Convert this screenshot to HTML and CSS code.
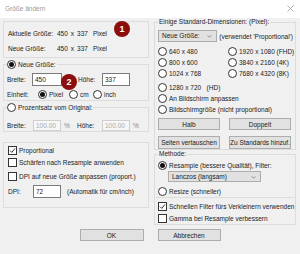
FILE: index.html
```html
<!DOCTYPE html>
<html lang="de">
<head>
    <meta charset="utf-8">
    <title>Größe ändern</title>
    <link rel="stylesheet" href="styles.css">
</head>
<body>
    <div class="window">
        <div class="titlebar">
            <span class="title">Größe ändern</span>
            <svg class="close" viewBox="0 0 7 7"><path d="M0.5 0.5L6.5 6.5M6.5 0.5L0.5 6.5"/></svg>
        </div>

        <div class="dialog">
            <div class="col">
                <div class="group info">
                    <div class="info-row"><span class="info-label">Aktuelle Größe:</span><span>450</span><span class="times">x</span><span>337</span><span class="unit">Pixel</span></div>
                    <div class="info-row"><span class="info-label">Neue Größe:</span><span>450</span><span class="times">x</span><span>337</span><span class="unit">Pixel</span></div>
                </div>

                <fieldset class="group size">
                    <legend><span class="radio on"></span><span class="opt-text">Neue Größe:</span></legend>
                    <div class="row size-row">
                        <span class="lbl-w">Breite:</span>
                        <span class="field w30">450</span>
                        <span class="lbl-h">Höhe:</span>
                        <span class="field w28">337</span>
                    </div>
                    <div class="row unit-row">
                        <span class="lbl-unit">Einheit:</span>
                        <span class="opt opt-px"><span class="radio on"></span><span class="opt-text">Pixel</span></span>
                        <span class="opt opt-cm"><span class="radio"></span><span class="opt-text">cm</span></span>
                        <span class="opt"><span class="radio"></span><span class="opt-text">inch</span></span>
                    </div>
                </fieldset>

                <fieldset class="group percent">
                    <legend><span class="radio"></span><span class="opt-text">Prozentsatz vom Original:</span></legend>
                    <div class="row pct-row">
                        <span class="lbl-pw">Breite:</span>
                        <span class="field off w28">100.00</span>
                        <span class="pct">%</span>
                        <span class="lbl-ph">Höhe:</span>
                        <span class="field off w28">100.00</span>
                        <span class="pct">%</span>
                    </div>
                </fieldset>

                <div class="group options">
                    <div class="row"><span class="check on"><svg viewBox="0 0 7 7"><path d="M1 3.6L2.8 5.4L6 1.4"/></svg></span><span class="opt-text">Proportional</span></div>
                    <div class="row"><span class="check"></span><span class="opt-text">Schärfen nach Resample anwenden</span></div>
                    <div class="row gap2"><span class="check"></span><span class="opt-text">DPI auf neue Größe anpassen (proport.)</span></div>
                    <div class="row dpi-row">
                        <span class="lbl-dpi">DPI:</span>
                        <span class="field w28">72</span>
                        <span class="dpi-note">(Automatik für cm/inch)</span>
                    </div>
                </div>
            </div>

            <div class="col">
                <fieldset class="group presets">
                    <legend class="text-legend">Einige Standard-Dimensionen: (Pixel):</legend>
                    <div class="row select-row">
                        <span class="select w62">Neue Größe:<svg class="chev" viewBox="0 0 6 4"><path d="M0.5 0.5L3 3L5.5 0.5"/></svg></span>
                        <span class="note">(verwendet 'Proportional')</span>
                    </div>
                    <div class="preset-grid">
                        <span class="opt"><span class="radio"></span><span class="opt-text">640 x 480</span></span>
                        <span class="opt"><span class="radio"></span><span class="opt-text">1920 x 1080 (FHD)</span></span>
                        <span class="opt"><span class="radio"></span><span class="opt-text">800 x 600</span></span>
                        <span class="opt"><span class="radio"></span><span class="opt-text">3840 x 2160 (4K)</span></span>
                        <span class="opt"><span class="radio"></span><span class="opt-text">1024 x 768</span></span>
                        <span class="opt"><span class="radio"></span><span class="opt-text">7680 x 4320 (8K)</span></span>
                    </div>
                    <div class="row gap2"><span class="radio"></span><span class="opt-text">1280 x 720&nbsp;&nbsp;&nbsp;(HD)</span></div>
                    <div class="row r11"><span class="radio"></span><span class="opt-text">An Bildschirm anpassen</span></div>
                    <div class="row r11"><span class="radio"></span><span class="opt-text">Bildschirmgröße (nicht proportional)</span></div>
                    <div class="btn-row first">
                        <span class="btn">Halb</span>
                        <span class="btn">Doppelt</span>
                    </div>
                    <div class="btn-row second">
                        <span class="btn">Seiten vertauschen</span>
                        <span class="btn">Zu Standards hinzuf.</span>
                    </div>
                </fieldset>

                <fieldset class="group method">
                    <legend class="text-legend">Methode:</legend>
                    <div class="row resample"><span class="radio on"></span><span class="opt-text">Resample (bessere Qualität), Filter:</span></div>
                    <span class="select filter">Lanczos (langsam)<svg class="chev" viewBox="0 0 6 4"><path d="M0.5 0.5L3 3L5.5 0.5"/></svg></span>
                    <div class="row resize"><span class="radio"></span><span class="opt-text">Resize (schneller)</span></div>
                    <div class="divider"></div>
                    <div class="row"><span class="check on"><svg viewBox="0 0 7 7"><path d="M1 3.6L2.8 5.4L6 1.4"/></svg></span><span class="opt-text">Schnellen Filter fürs Verkleinern verwenden</span></div>
                    <div class="row"><span class="check"></span><span class="opt-text">Gamma bei Resample verbessern</span></div>
                </fieldset>
            </div>
        </div>

        <div class="actions">
            <span class="btn ok">OK</span>
            <span class="btn cancel">Abbrechen</span>
        </div>

        <span class="badge badge-1">1</span>
        <span class="badge badge-2">2</span>
    </div>
</body>
</html>
```

FILE: styles.css
```css
:root {
    --bg-color: #f0f0f0;
    --text-color: #1a1a1a;
    --frame-color: #dcdcdc;
    --button-color: #e1e1e1;
    --button-border: #adadad;
    --badge-color: #8b0d0d;
}

* {
    box-sizing: border-box;
}

body {
    margin: 0;
    background-color: #fff;
    color: var(--text-color);
    font-family: 'Liberation Sans', Arial, sans-serif;
    font-size: 6.5px;
}

.window {
    position: relative;
    width: 300px;
    height: 254px;
    background-color: var(--bg-color);
    overflow: hidden;
}

.titlebar {
    height: 18px;
    background-color: #fff;
    display: flex;
    align-items: center;
    justify-content: space-between;
    padding: 0 6px 2px 5px;
}

.title {
    color: #9a9a9a;
}

.close {
    width: 7px;
    height: 7px;
    fill: none;
    stroke: #9a9a9a;
    stroke-width: 0.8;
}

.dialog {
    display: grid;
    grid-template-columns: 146px 142px;
    column-gap: 5px;
    padding-left: 3px;
}

.col {
    display: flex;
    flex-direction: column;
    align-items: stretch;
}

.group {
    border: 1px solid var(--frame-color);
}

fieldset.group {
    margin: 0;
    min-width: 0;
    padding: 0 2px 0 3px;
}

legend {
    display: flex;
    align-items: center;
    height: 12px;
    padding: 0 1px 0 0;
}

.text-legend {
    height: 8px;
    line-height: 8px;
    padding: 0 1px;
}

.row {
    display: flex;
    align-items: center;
    height: 12px;
    white-space: nowrap;
}

.gap2 {
    margin-top: 2px;
}

.r11 {
    height: 11px;
}

/* radio and check boxes */
.radio {
    flex: none;
    display: inline-block;
    width: 9px;
    height: 9px;
    border: 1px solid #333;
    border-radius: 50%;
    background-color: #fff;
}

.radio.on::after {
    content: "";
    display: block;
    width: 5px;
    height: 5px;
    margin: 1px;
    border-radius: 50%;
    background-color: #111;
}

.check {
    flex: none;
    display: inline-block;
    width: 9px;
    height: 9px;
    border: 1px solid #333;
    background-color: #fff;
}

.check svg {
    display: block;
    width: 7px;
    height: 7px;
    fill: none;
    stroke: #222;
    stroke-width: 0.9;
}

.opt-text {
    margin-left: 2px;
}

.opt {
    display: flex;
    align-items: center;
}

/* inputs */
.field {
    display: inline-block;
    height: 13px;
    line-height: 11px;
    padding-left: 2px;
    border: 1px solid #7a7a7a;
    background-color: #fff;
}

.field.off {
    height: 11px;
    line-height: 9px;
    border-color: #cfcfcf;
    background-color: #f7f7f7;
    color: #a8a8a8;
}

.w28 { width: 28px; }
.w30 { width: 30px; }
.w62 { width: 62px; }

.select {
    position: relative;
    display: inline-block;
    height: 12px;
    line-height: 10px;
    padding-left: 3px;
    border: 1px solid var(--button-border);
    background-color: var(--button-color);
}

.chev {
    position: absolute;
    right: 4px;
    top: 4px;
    width: 5px;
    height: 3px;
    fill: none;
    stroke: #555;
    stroke-width: 0.8;
}

.btn {
    display: flex;
    align-items: center;
    justify-content: center;
    border: 1px solid var(--button-border);
    background-color: var(--button-color);
    white-space: nowrap;
}

/* left column */
.info {
    margin-top: 3px;
    height: 37px;
    padding: 4px 0 1px 4px;
}

.info-row {
    display: flex;
    line-height: 15px;
    white-space: nowrap;
}

.info-label {
    width: 49px;
}

.times {
    margin: 0 3px;
}

.unit {
    margin-left: 5px;
}

.size {
    margin-top: 4px;
    padding-bottom: 5px;
}

.size-row {
    height: 13px;
    margin-top: 3px;
}

.lbl-w { width: 25px; }

.lbl-h {
    width: 24px;
    margin-left: 16px;
}

.w28.field:last-child {
    margin-left: 0;
}

.unit-row {
    margin-top: 2px;
}

.lbl-unit { width: 31px; }
.opt-px { width: 31px; }
.opt-cm { width: 24px; }

.percent {
    padding-bottom: 11px;
}

.pct-row {
    margin-top: 6px;
}

.lbl-pw { width: 26px; }

.pct {
    width: 16px;
    padding-left: 3px;
    color: #8a8a8a;
}

.lbl-ph { width: 25px; }

.options {
    margin-top: 10px;
    height: 66px;
    padding: 1px 0 0 4px;
}

.dpi-row {
    height: 14px;
    margin-top: 2px;
}

.lbl-dpi { width: 25px; }

.dpi-note {
    margin-left: 6px;
}

/* right column */
.presets {
    padding-bottom: 5px;
}

.select-row {
    margin-top: 4px;
}

.note {
    margin-left: 2px;
}

.preset-grid {
    display: grid;
    grid-template-columns: 70px 1fr;
    grid-auto-rows: 11px;
    margin-top: 4px;
    white-space: nowrap;
}

.btn-row {
    display: grid;
    grid-template-columns: 62px 62px;
    column-gap: 9px;
}

.btn-row.first {
    height: 12px;
    margin-top: 3px;
}

.btn-row.second {
    height: 13px;
    margin-top: 6px;
}

.method {
    margin-top: 3px;
    padding-bottom: 1px;
}

.resample {
    margin-top: 1px;
}

.filter {
    width: 93px;
    height: 11px;
    line-height: 9px;
    margin-left: 10px;
}

.resize {
    margin-top: 3px;
}

.divider {
    height: 1px;
    margin: 0 -1px 2px -2px;
    background-color: var(--frame-color);
}

/* dialog buttons */
.actions {
    display: flex;
    justify-content: center;
    gap: 14px;
    margin-top: 4px;
}

.actions .btn {
    height: 12px;
}

.ok { width: 64px; }
.cancel { width: 63px; }

.badge {
    position: absolute;
    width: 16px;
    height: 16px;
    border-radius: 50%;
    background-color: var(--badge-color);
    color: #fff;
    font-weight: bold;
    font-size: 9px;
    line-height: 16px;
    text-align: center;
}

.badge-1 {
    left: 114px;
    top: 21px;
}

.badge-2 {
    left: 61px;
    top: 74px;
}
```
